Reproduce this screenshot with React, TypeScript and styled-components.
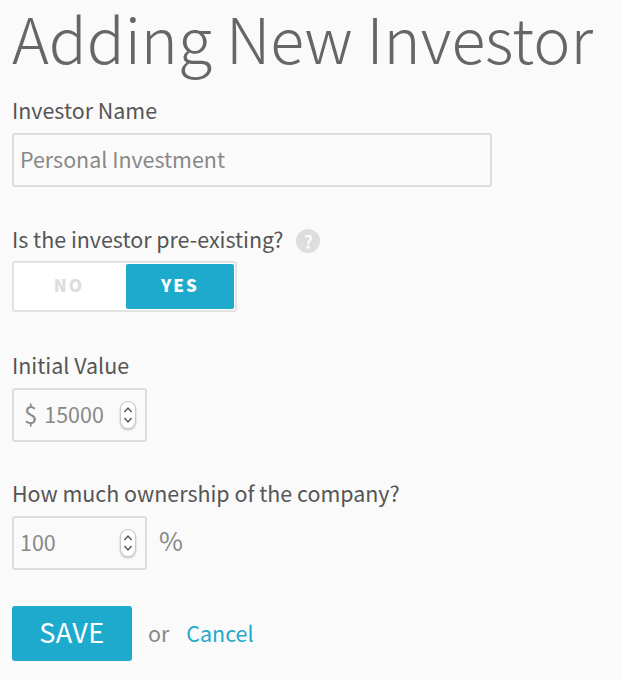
import React from "react";
import styled, { createGlobalStyle } from "styled-components";

const GlobalStyle = createGlobalStyle`
  html, body {
    margin: 0;
    padding: 0;
    background: #fafafa;
  }
  body {
    font-family: "Noto Sans CJK SC", "Noto Sans", sans-serif;
    color: #555;
  }
`;

const Page = styled.form`
  width: 622px;
  height: 680px;
  overflow: hidden;
  box-sizing: border-box;
  padding: 0 12px;
  display: flex;
  flex-direction: column;
`;

const Title = styled.h1`
  margin: 0;
  height: 82px;
  font-size: 62.7px;
  line-height: 74px;
  font-weight: 300;
  color: #666;
  white-space: nowrap;
`;

const Label = styled.label`
  display: flex;
  align-items: center;
  height: 28px;
  padding-bottom: 2px;
  box-sizing: border-box;
  font-size: 21.45px;
  line-height: 24px;
  color: #555;
  white-space: nowrap;
`;

const Field = styled.div<{ $top: number; $gap?: number }>`
  display: flex;
  flex-direction: column;
  gap: ${(props) => props.$gap ?? 8}px;
  margin-top: ${(props) => props.$top}px;
`;

const Box = styled.div<{ $width: number }>`
  box-sizing: border-box;
  width: ${(props) => props.$width}px;
  height: 54px;
  border: 2px solid #ddd;
  border-radius: 3px;
  display: flex;
  align-items: center;
  padding: 0 6px 3px;
  font-size: 21.45px;
  color: #888;
`;

const Prefix = styled.span`
  margin-left: 4px;
  margin-right: 7px;
  font-size: 24px;
`;

const Value = styled.span`
  flex: 1;
  white-space: nowrap;
`;

const Stepper = styled.span`
  box-sizing: border-box;
  width: 16px;
  height: 28px;
  border-radius: 8px;
  background: #fff;
  border: 1px solid #ccc;
  box-shadow: 0 1px 2px rgba(0, 0, 0, 0.25);
  display: flex;
  align-items: center;
  justify-content: center;
  margin: 3px 3px 0 0;
`;

const Row = styled.div`
  display: flex;
  align-items: center;
`;

const Help = styled.span`
  width: 24px;
  height: 24px;
  border-radius: 50%;
  background: #ddd;
  color: #fafafa;
  font-size: 18px;
  font-weight: 700;
  display: flex;
  align-items: center;
  justify-content: center;
  margin: 2px 0 0 13px;
`;

const Toggle = styled.div`
  box-sizing: border-box;
  width: 225px;
  height: 51px;
  border: 2px solid #e2e2e2;
  border-radius: 3px;
  background: #fff;
  padding: 1px;
  display: grid;
  grid-template-columns: 111px 108px;
`;

const ToggleOption = styled.div<{ $active?: boolean }>`
  display: flex;
  align-items: center;
  justify-content: center;
  padding-bottom: 4px;
  padding-right: ${(props) => (props.$active ? 0 : 3)}px;
  border-radius: 2px;
  font-size: 17px;
  font-weight: 900;
  letter-spacing: 2px;
  background: ${(props) => (props.$active ? "#1eaacc" : "#fff")};
  color: ${(props) => (props.$active ? "#fff" : "#ddd")};
`;

const Unit = styled.span`
  margin: 0 0 8px 12px;
  font-size: 26px;
  color: #888;
`;

const Actions = styled.div`
  display: flex;
  align-items: center;
  margin-top: 36px;
`;

const SaveButton = styled.button`
  width: 120px;
  height: 55px;
  padding: 0 0 4px;
  border: none;
  border-radius: 3px;
  background: #1eaacc;
  color: #fff;
  font-family: inherit;
  font-size: 27px;
  letter-spacing: 0.5px;
`;

const Or = styled.span`
  margin: 0 0 3px 16px;
  font-size: 21.45px;
  color: #888;
`;

const CancelLink = styled.a`
  margin: 0 0 3px 17px;
  font-size: 21.45px;
  color: #1eaacc;
`;

const StepperIcon = () => (
  <Stepper>
    <svg width="10" height="20" viewBox="0 0 10 20" fill="none" stroke="#555" strokeWidth="1.4">
      <path d="M1.5 7 L5 3 L8.5 7" />
      <path d="M1.5 13 L5 17 L8.5 13" />
    </svg>
  </Stepper>
);

export default function App() {
  return (
    <>
      <GlobalStyle />
      <Page>
        <Title>Adding New Investor</Title>
        <Field $top={15}>
          <Label>Investor Name</Label>
          <Box $width={480}>
            <Value>Personal Investment</Value>
          </Box>
        </Field>
        <Field $top={39} $gap={7}>
          <Row>
            <Label>Is the investor pre-existing?</Label>
            <Help>?</Help>
          </Row>
          <Toggle>
            <ToggleOption>NO</ToggleOption>
            <ToggleOption $active>YES</ToggleOption>
          </Toggle>
        </Field>
        <Field $top={40}>
          <Label>Initial Value</Label>
          <Box $width={135}>
            <Prefix>$</Prefix>
            <Value>15000</Value>
            <StepperIcon />
          </Box>
        </Field>
        <Field $top={38}>
          <Label>How much ownership of the company?</Label>
          <Row>
            <Box $width={135}>
              <Value>100</Value>
              <StepperIcon />
            </Box>
            <Unit>%</Unit>
          </Row>
        </Field>
        <Actions>
          <SaveButton type="button">SAVE</SaveButton>
          <Or>or</Or>
          <CancelLink>Cancel</CancelLink>
        </Actions>
      </Page>
    </>
  );
}
